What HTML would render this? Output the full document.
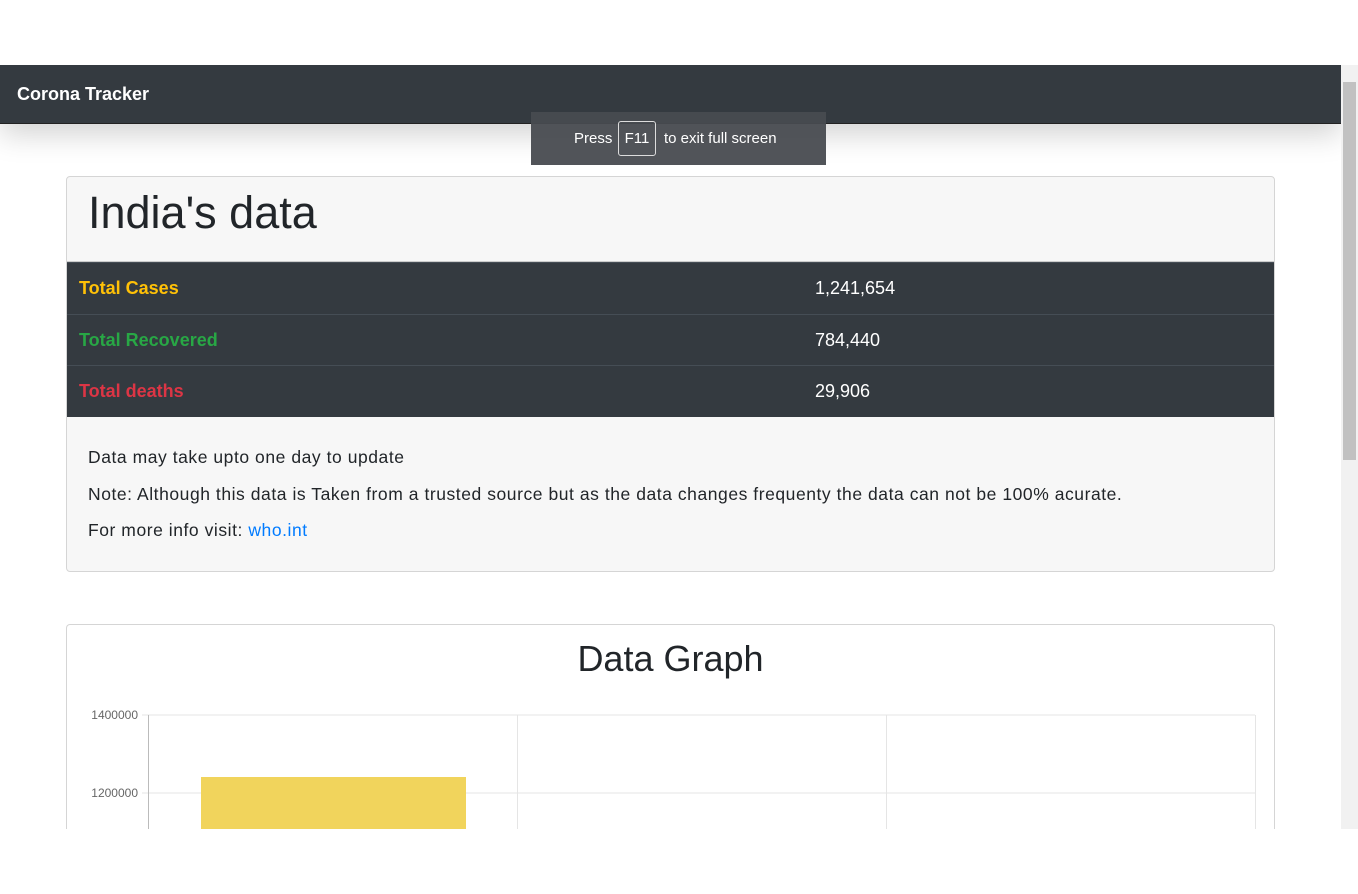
<!DOCTYPE html>
<html><head><meta charset="utf-8"><style>
*{box-sizing:border-box;margin:0;padding:0}
html,body{width:1358px;height:894px;overflow:hidden}
body{background:#fff;font-family:"Liberation Sans",sans-serif;position:relative;color:#212529}
#view{position:absolute;left:0;top:65px;width:1341px;height:764px;overflow:hidden;background:#fff}
.nav{position:absolute;left:0;top:0;width:1341px;height:59px;background:#343a40;border-bottom:1px solid #222;box-shadow:0 10px 30px rgba(0,0,0,0.18)}
.nav span{position:absolute;left:17px;top:19px;color:#fff;font-size:18px;font-weight:bold}
.card{position:absolute;left:66px;width:1209px;border:1px solid #d5d5d5;border-radius:4px;background:#f7f7f7;overflow:hidden}
.c1{top:111px;height:396px}
.c1 h1{height:85px;font-weight:normal;font-size:45px;padding:10px 0 0 21px;border-bottom:1px solid #ccc}
.row{height:51.7px;background:#343a40;border-top:1px solid #454d55;position:relative;font-size:18px}
.row .l{position:absolute;left:12px;top:15px;font-weight:bold}
.row .v{position:absolute;left:748px;top:15px;color:#fff}
.note{padding:22px 21px;font-size:17.5px;line-height:36.5px;letter-spacing:0.55px}
.note p{margin:0}
.c2{top:559px;height:205px;background:#fff;border-bottom:none;border-radius:4px 4px 0 0}
.c2 h2{text-align:center;font-weight:normal;font-size:36px;margin-top:13px}
.scroll{position:absolute;left:1341px;top:65px;width:17px;height:764px;background:#f1f1f1}
.thumb{position:absolute;left:2px;top:17px;width:13px;height:378px;background:#c1c1c1}
.fs{position:absolute;left:531px;top:112px;width:295px;height:53px;background:rgba(72,75,80,0.95);color:#fff;font-size:15px}
.fs .k{position:absolute;left:87px;top:9px;width:38px;height:35px;border:1px solid #ddd;border-radius:3px;text-align:center;line-height:33px}
</style></head><body>
<div id="view">
<div class="nav"><span>Corona Tracker</span></div>
<div class="card c1">
<h1>India's data</h1>
<div class="row"><span class="l" style="color:#ffc107">Total Cases</span><span class="v">1,241,654</span></div>
<div class="row"><span class="l" style="color:#28a745">Total Recovered</span><span class="v">784,440</span></div>
<div class="row"><span class="l" style="color:#dc3545">Total deaths</span><span class="v">29,906</span></div>
<div class="note"><p>Data may take upto one day to update</p><p>Note: Although this data is Taken from a trusted source but as the data changes frequenty the data can not be 100% acurate.</p><p>For more info visit: <span style="color:#007bff">who.int</span></p></div>
</div>
<div class="card c2">
<h2>Data Graph</h2>
<svg style="position:absolute;left:-67px;top:-560px" width="1300" height="765">
<g stroke="#e5e5e5" stroke-width="1">
<line x1="142" y1="650" x2="1255" y2="650"/><line x1="142" y1="728" x2="1255" y2="728"/>
<line x1="517.5" y1="650" x2="517.5" y2="765"/><line x1="886.5" y1="650" x2="886.5" y2="765"/><line x1="1255.5" y1="650" x2="1255.5" y2="765"/>
</g>
<line x1="148.5" y1="650" x2="148.5" y2="765" stroke="#bbb"/>
<rect x="201" y="712" width="265" height="60" fill="#f1d45c"/>
<text x="138" y="654" font-size="12" fill="#666" text-anchor="end" font-family="Liberation Sans">1400000</text>
<text x="138" y="732" font-size="12" fill="#666" text-anchor="end" font-family="Liberation Sans">1200000</text>
</svg>
</div>
</div>
<div class="scroll"><div class="thumb"></div></div>
<div class="fs"><span style="position:absolute;left:43px;top:18px">Press</span><div class="k">F11</div><span style="position:absolute;left:133px;top:18px">to exit full screen</span></div>
</body></html>
